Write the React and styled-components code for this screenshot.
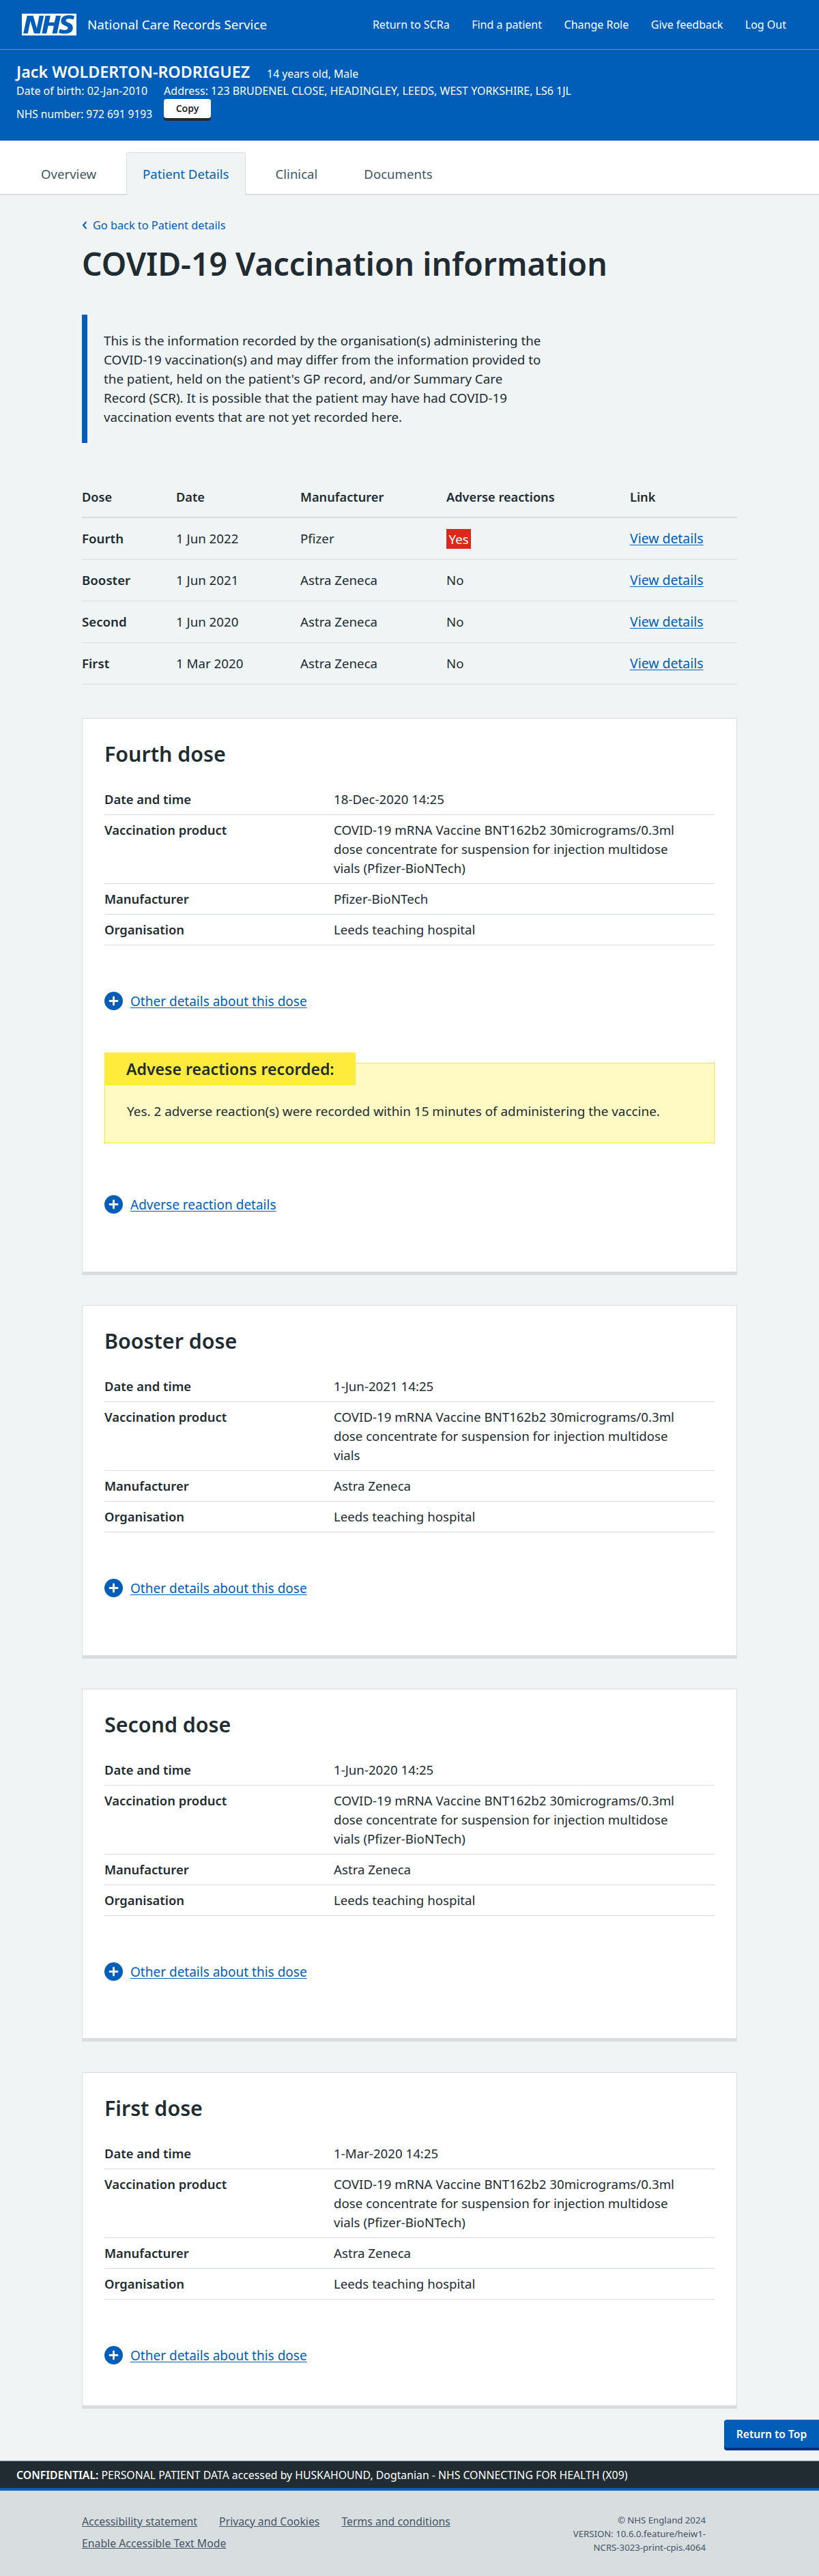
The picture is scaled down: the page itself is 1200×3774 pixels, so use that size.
import React from "react";
import styled, { createGlobalStyle } from "styled-components";

const Global = createGlobalStyle`
  html, body { margin: 0; padding: 0; background: #f0f4f5; }
  body { font-family: "Noto Sans", "Open Sans", Arial, sans-serif; color: #212b32; font-size: 18.7px; line-height: 28px; }
  * { box-sizing: border-box; }
`;

const Page = styled.div`width: 1200px; height: 3774px; display: flex; flex-direction: column;`;
const TopBar = styled.header`
  height: 73px; background: #005eb8; border-bottom: 1px solid #5f94cf; color: #fff;
  display: flex; align-items: center; justify-content: space-between; padding: 0 48px 0 32px;
`;
const Brand = styled.div`display: flex; align-items: center; gap: 16px; font-size: 18.8px;`;
const LogoSvg = styled.svg`width: 80px; height: 32px; display: block;`;
const Nav = styled.nav`display: flex; gap: 32.5px; font-size: 16px;`;
const Banner = styled.section`
  height: 133px; background: #005eb8; color: #fff; padding: 16px 24px 0; font-size: 16px; line-height: 24px;
`;
const NameRow = styled.div`display: flex; align-items: baseline; gap: 25px;`;
const Name = styled.div`font-size: 23.3px; font-weight: 600; line-height: 32px;`;
const Age = styled.div`font-size: 15.8px;`;
const DetailRow = styled.div`display: flex; gap: 24px;`;
const NumberRow = styled.div`display: flex; gap: 17px; align-items: flex-start;`;
const NhsNumber = styled.span`margin-top: 10px; font-size: 15.5px;`;
const CopyButton = styled.button`
  width: 69px; height: 28px; background: #fff; color: #212b32; border: 0; border-radius: 4px;
  box-shadow: 0 4px 0 #212b32; font: 600 14px/20px "Noto Sans", sans-serif; padding: 0;
`;
const Tabs = styled.div`
  height: 80px; background: #fff; border-bottom: 2px solid #d8dde0;
  display: flex; align-items: flex-end; gap: 20px; padding: 0 0 0 36px;
`;
const Tab = styled.div`
  height: 63px; margin-bottom: -2px; padding: 0 23px; display: flex; align-items: center; font-size: 18.6px;
  color: ${p => (p.$active ? "#005eb8" : "#425563")};
  background: ${p => (p.$active ? "#f0f4f5" : "transparent")};
  border: ${p => (p.$active ? "1px solid #d8dde0" : "1px solid transparent")};
  border-bottom: 0; border-radius: 4px 4px 0 0;
`;
const Main = styled.main`width: 960px; margin: 0 0 0 120px; padding-top: 32px; flex: 1;`;
const BackLink = styled.div`display: flex; align-items: center; gap: 8px; font-size: 16.3px; line-height: 24px; color: #005eb8;`;
const Title = styled.h1`margin: 16px 0 0; font-size: 46.4px; line-height: 56px; font-weight: 600;`;
const Inset = styled.div`
  margin-top: 47px; border-left: 8px solid #005eb8; padding: 24px; font-size: 18.8px; width: 704px;
`;
const Table = styled.table`
  width: 960px; margin-top: 40px; border-collapse: collapse; table-layout: fixed; font-size: 18.7px;
`;
const Th = styled.th`
  text-align: left; font-weight: 600; padding: 0 0 15px; height: 69px; border-bottom: 2px solid #d8dde0;
  vertical-align: bottom; font-size: 18.2px; width: ${p => p.$w}px;
`;
const Td = styled.td`
  padding: 0; height: 61px; border-bottom: 1px solid #d8dde0; font-weight: ${p => (p.$strong ? 600 : 400)};
`;
const YesTag = styled.span`display: inline-block; background: #da291c; color: #fff; padding: 0 3.5px; line-height: 29px; vertical-align: middle;`;
const Anchor = styled.a`color: #005eb8; text-decoration: underline; text-underline-offset: 2px; font-size: ${p => p.$size || 19}px;`;
const Card = styled.section`
  margin-top: ${p => p.$mt}px; background: #fff; border: 1px solid #d8dde0; border-bottom: 5px solid #d8dde0;
  padding: 32px 32px 0; height: ${p => p.$h}px;
`;
const CardTitle = styled.h2`margin: 0; font-size: 30.4px; line-height: 40px; font-weight: 600;`;
const Summary = styled.div`margin-top: 24px;`;
const Row = styled.div`
  display: grid; grid-template-columns: 336px 1fr; padding: 8px 0; border-bottom: 1px solid #d8dde0;
`;
const Key = styled.div`font-weight: 600; font-size: 18.4px;`;
const Value = styled.div`padding-right: 40px;`;
const Disclosure = styled.div`
  display: flex; align-items: center; gap: 11px; margin-top: ${p => p.$mt}px; height: 28px;
`;
const Alert = styled.div`
  position: relative; margin-top: 76px; height: 118px; background: #fff9c4; border: 1px solid #ffeb3b;
  padding: 56px 32px 0; font-size: 18.9px;
`;
const AlertHead = styled.div`
  position: absolute; left: -1px; top: -16px; height: 48px; width: 368px; background: #ffeb3b;
  padding-left: 32px; font-size: 23.1px; font-weight: 600; line-height: 48px;
`;
const ToTop = styled.div`
  align-self: flex-end; margin: 16px 0 19px; width: 139px; height: 41px; background: #005eb8; color: #fff;
  border-radius: 4px 0 0 4px; box-shadow: 0 4px 0 #003087; font-size: 15.6px; font-weight: 600;
  display: flex; align-items: center; justify-content: center;
`;
const Confidential = styled.div`
  height: 44px; background: #212b32; color: #fff; border-top: 1px solid #768692; border-bottom: 4px solid #005eb8;
  padding: 6px 24px 0; font-size: 15.8px;
`;
const Strong = styled.strong`font-weight: 600;`;
const Footer = styled.footer`
  height: 125px; background: #d8dde0; color: #425563; padding: 31px 0 0 120px; display: flex; justify-content: space-between;
`;
const FootLinks = styled.div`display: flex; flex-wrap: wrap; gap: 4px 32px; width: 560px; font-size: 15.8px; align-content: flex-start;`;
const FootLink = styled.a`color: #425563; text-decoration: underline; line-height: 28px;`;
const FootMeta = styled.div`width: 200px; margin: 2px 166px 0 0; text-align: right; font-size: 13.2px; line-height: 20px;`;

const Plus = () => (
  <svg width="27" height="27" viewBox="0 0 27 27" style={{ flex: "none" }}>
    <circle cx="13.5" cy="13.5" r="13.5" fill="#005eb8" />
    <path d="M13.5 8v11M8 13.5h11" stroke="#fff" strokeWidth="2.8" strokeLinecap="round" />
  </svg>
);
const Chevron = () => (
  <svg width="8" height="12" viewBox="0 0 8 12"><path d="M6 1.5 2 6l4 4.5" fill="none" stroke="#005eb8" strokeWidth="2" strokeLinecap="round" /></svg>
);

const withVendor = "COVID-19 mRNA Vaccine BNT162b2 30micrograms/0.3ml dose concentrate for suspension for injection multidose vials (Pfizer-BioNTech)";
const doses = [
  { t: "Fourth dose", d: "18-Dec-2020 14:25", p: withVendor, m: "Pfizer-BioNTech", mt: 49, h: 816, adverse: true },
  { t: "Booster dose", d: "1-Jun-2021 14:25", p: "COVID-19 mRNA Vaccine BNT162b2 30micrograms/0.3ml dose concentrate for suspension for injection multidose vials", m: "Astra Zeneca", mt: 44, h: 518 },
  { t: "Second dose", d: "1-Jun-2020 14:25", p: withVendor, m: "Astra Zeneca", mt: 44, h: 517 },
  { t: "First dose", d: "1-Mar-2020 14:25", p: withVendor, m: "Astra Zeneca", mt: 45, h: 493 },
];
const rows = [
  ["Fourth", "1 Jun 2022", "Pfizer", true],
  ["Booster", "1 Jun 2021", "Astra Zeneca", false],
  ["Second", "1 Jun 2020", "Astra Zeneca", false],
  ["First", "1 Mar 2020", "Astra Zeneca", false],
];

export default function App() {
  return (
    <Page>
      <Global />
      <TopBar>
        <Brand>
          <LogoSvg viewBox="0 0 40 16" role="img" aria-label="NHS">
            <path fill="#fff" d="M0 0h40v16H0z" />
            <path fill="#005eb8" d="M3.9 1.5h4.4l2.6 9h.1l1.8-9h3.3l-2.8 13H9l-2.7-9h-.1l-1.8 9H1.1M17.3 1.5h3.6l-1 4.9h4L25 1.5h3.5l-2.7 13h-3.5l1.1-5.6h-4.1l-1.2 5.6h-3.4M37.7 4.4c-.7-.3-1.6-.6-2.9-.6-1.4 0-2.5.2-2.5 1.3 0 1.8 5.1 1.2 5.1 5.1 0 3.6-3.3 4.5-6.4 4.5-1.3 0-2.9-.3-4-.7l.8-2.7c.7.4 2.1.7 3.2.7s2.8-.2 2.8-1.5c0-2.1-5.1-1.3-5.1-5 0-3.4 2.9-4.4 5.8-4.4 1.6 0 3.1.2 4 .6" />
          </LogoSvg>
          <span>National Care Records Service</span>
        </Brand>
        <Nav>
          {["Return to SCRa", "Find a patient", "Change Role", "Give feedback", "Log Out"].map(n => <span key={n}>{n}</span>)}
        </Nav>
      </TopBar>
      <Banner>
        <NameRow><Name>Jack WOLDERTON-RODRIGUEZ</Name><Age>14 years old, Male</Age></NameRow>
        <DetailRow><span>Date of birth: 02-Jan-2010</span><span>Address: 123 BRUDENEL CLOSE, HEADINGLEY, LEEDS, WEST YORKSHIRE, LS6 1JL</span></DetailRow>
        <NumberRow><NhsNumber>NHS number: 972 691 9193</NhsNumber><CopyButton>Copy</CopyButton></NumberRow>
      </Banner>
      <Tabs>
        <Tab>Overview</Tab><Tab $active>Patient Details</Tab><Tab>Clinical</Tab><Tab>Documents</Tab>
      </Tabs>
      <Main>
        <BackLink><Chevron />Go back to Patient details</BackLink>
        <Title>COVID-19 Vaccination information</Title>
        <Inset>This is the information recorded by the organisation(s) administering the COVID-19 vaccination(s) and may differ from the information provided to the patient, held on the patient's GP record, and/or Summary Care Record (SCR). It is possible that the patient may have had COVID-19 vaccination events that are not yet recorded here.</Inset>
        <Table>
          <thead>
            <tr><Th $w={138}>Dose</Th><Th $w={182}>Date</Th><Th $w={214}>Manufacturer</Th><Th $w={269}>Adverse reactions</Th><Th $w={157}>Link</Th></tr>
          </thead>
          <tbody>
            {rows.map(r => (
              <tr key={r[0]}>
                <Td $strong>{r[0]}</Td><Td>{r[1]}</Td><Td>{r[2]}</Td>
                <Td>{r[3] ? <YesTag>Yes</YesTag> : "No"}</Td>
                <Td><Anchor $size={19.4}>View details</Anchor></Td>
              </tr>
            ))}
          </tbody>
        </Table>
        {doses.map(d => (
          <Card key={d.t} $mt={d.mt} $h={d.h}>
            <CardTitle>{d.t}</CardTitle>
            <Summary>
              <Row><Key>Date and time</Key><Value>{d.d}</Value></Row>
              <Row><Key>Vaccination product</Key><Value>{d.p}</Value></Row>
              <Row><Key>Manufacturer</Key><Value>{d.m}</Value></Row>
              <Row><Key>Organisation</Key><Value>Leeds teaching hospital</Value></Row>
            </Summary>
            <Disclosure $mt={68}><Plus /><Anchor>Other details about this dose</Anchor></Disclosure>
            {d.adverse && (
              <>
                <Alert>
                  <AlertHead>Advese reactions recorded:</AlertHead>
                  Yes. 2 adverse reaction(s) were recorded within 15 minutes of administering the vaccine.
                </Alert>
                <Disclosure $mt={76}><Plus /><Anchor>Adverse reaction details</Anchor></Disclosure>
              </>
            )}
          </Card>
        ))}
      </Main>
      <ToTop>Return to Top</ToTop>
      <Confidential><Strong>CONFIDENTIAL:</Strong> PERSONAL PATIENT DATA accessed by HUSKAHOUND, Dogtanian - NHS CONNECTING FOR HEALTH (X09)</Confidential>
      <Footer>
        <FootLinks>
          <FootLink>Accessibility statement</FootLink><FootLink>Privacy and Cookies</FootLink><FootLink>Terms and conditions</FootLink><FootLink>Enable Accessible Text Mode</FootLink>
        </FootLinks>
        <FootMeta>© NHS England 2024<br />VERSION: 10.6.0.feature/heiw1-NCRS-3023-print-cpis.4064</FootMeta>
      </Footer>
    </Page>
  );
}
